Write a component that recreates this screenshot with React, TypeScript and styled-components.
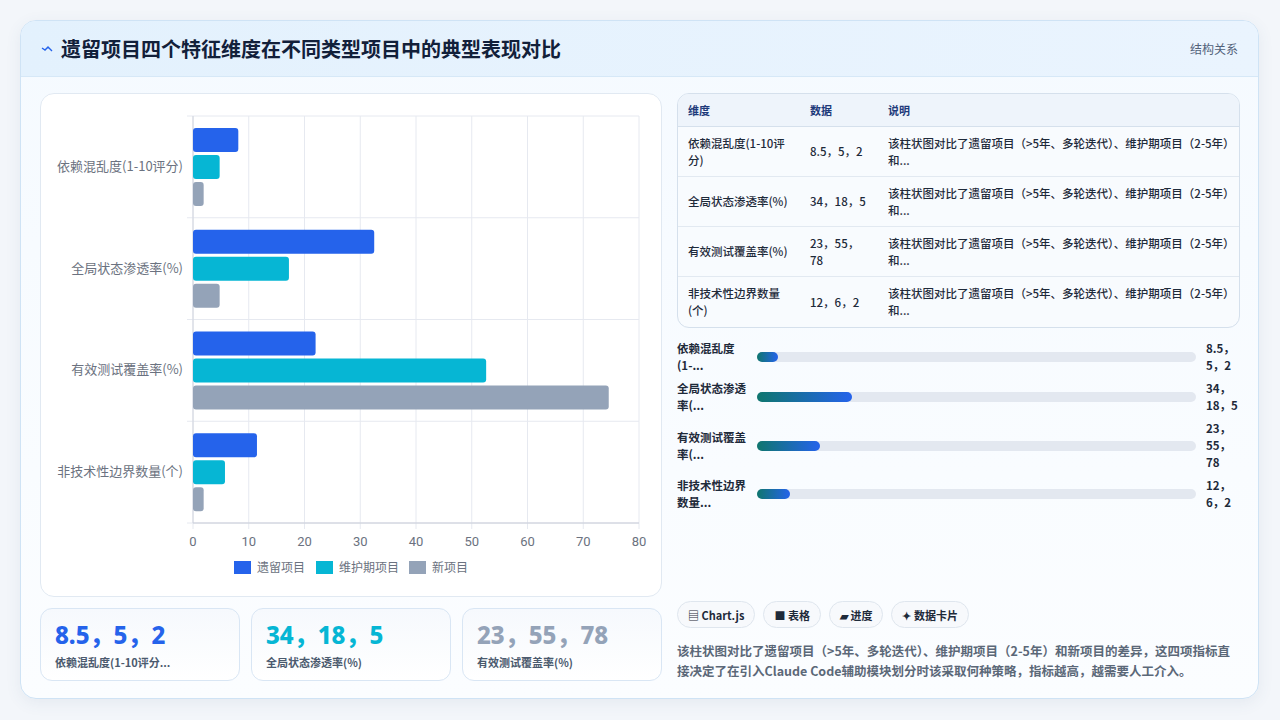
import React from "react";
import styled, { createGlobalStyle } from "styled-components";

const Global = createGlobalStyle`
  body { margin: 0; background: #f3f6fa; font-family: "Noto Sans CJK SC", "Noto Sans", sans-serif; }
  * { box-sizing: border-box; }
`;

const Page = styled.div`
  width: 1280px; height: 720px; padding: 20px 21px 21px 20px;
`;
const Card = styled.div`
  height: 679px; border: 1px solid #cfe3f5; border-radius: 16px; overflow: hidden;
  background: linear-gradient(180deg, #f5faff 0%, #fbfdff 100%);
  display: flex; flex-direction: column;
  box-shadow: 0 4px 16px rgba(60,90,130,0.08);
`;
const Header = styled.div`
  height: 56px; flex: none; display: flex; align-items: center; justify-content: space-between;
  padding: 0 20px; background: linear-gradient(90deg, #e3f1fd, #eaf4fe);
  border-bottom: 1px solid #d6e8f7;
`;
const Title = styled.h1`
  margin: 0; font-size: 20px; font-weight: 700; color: #12203a; display: flex; align-items: center; gap: 8px;
`;
const HeaderLink = styled.span` font-size: 12px; color: #52627a; `;
const Body = styled.div`
  flex: 1; display: grid; grid-template-columns: 622px 1fr; gap: 15px; padding: 16px 18px 18px 19px;
`;
const Col = styled.div` display: flex; flex-direction: column; gap: 11px; min-width: 0; `;
const ChartCard = styled.div`
  height: 504px; background: #fff; border: 1px solid #e1e9f2; border-radius: 14px; position: relative;
`;
const Stats = styled.div` display: grid; grid-template-columns: repeat(3, 1fr); gap: 11px; `;
const Stat = styled.div`
  height: 73px; border: 1px solid #d9e6f4; border-radius: 12px; background: linear-gradient(180deg,#f6f9fd,#fff);
  padding: 11px 14px; display: flex; flex-direction: column; gap: 4px;
`;
const StatValue = styled.div<{ c: string }>` font-size: 24px; font-weight: 800; color: ${p => p.c}; line-height: 30px; font-family: "Noto Sans", "Noto Sans CJK SC", sans-serif; `;
const StatLabel = styled.div` font-size: 11px; font-weight: 700; color: #4b5a6e; `;

const Table = styled.table`
  width: 100%; border-collapse: separate; border-spacing: 0; border: 1px solid #d5e0ec; border-radius: 12px;
  overflow: hidden; background: #f8fbfe; font-size: 11px; table-layout: fixed;
`;
const Th = styled.th<{ w?: number }>`
  text-align: left; color: #1d3a7a; font-weight: 700; background: #eef4fb; height: 33px; padding: 0 10px;
  border-bottom: 1px solid #d5e0ec; ${p => p.w ? `width:${p.w}px;` : ""}
`;
const Td = styled.td`
  color: #1e2a3a; font-weight: 500; padding: 6px 10px; height: 50px; line-height: 17px; vertical-align: middle;
  border-bottom: 1px solid #e2e9f1; font-size: 11.5px;
  tr:last-child & { border-bottom: none; }
`;
const Progress = styled.div` display: flex; flex-direction: column; gap: 6px; margin-top: 1px; `;
const PRow = styled.div` display: grid; grid-template-columns: 80px 1fr 34px; align-items: center; `;
const PLabel = styled.div` font-size: 11.5px; font-weight: 700; color: #1e2a3a; line-height: 17px; width: 72px; `;
const Track = styled.div` height: 10px; border-radius: 5px; background: #e3e8f0; margin-right: 10px; `;
const Fill = styled.div` height: 10px; border-radius: 5px; background: linear-gradient(90deg,#0f766e,#2563eb); `;
const PVal = styled.div` font-size: 11.5px; font-weight: 700; color: #1e2a3a; line-height: 17px; `;
const Spacer = styled.div` flex: 1; `;
const Chips = styled.div` display: flex; gap: 8px; `;
const Chip = styled.span`
  height: 27px; padding: 0 10px; border-radius: 14px; border: 1px solid #dfe6ee; background: #f7f9fc;
  font-size: 11px; font-weight: 700; color: #1e2a3a; display: flex; align-items: center; gap: 3px;
`;
const Para = styled.p` margin: 2px 0 0; font-size: 12.5px; line-height: 20px; font-weight: 700; color: #5b6878; `;

const cats = ["依赖混乱度(1-10评分)", "全局状态渗透率(%)", "有效测试覆盖率(%)", "非技术性边界数量(个)"];
const data = [[8.5, 5, 2], [34, 18, 5], [23, 55, 78], [12, 6, 2]];
const colors = ["#2563eb", "#06b6d4", "#94a3b8"];

function Chart() {
  const x0 = 152, x1 = 598, y0 = 22, y1 = 429;
  const sx = (v: number) => x0 + (v / 80) * (x1 - x0);
  const bar = (v: number) => v * 5.33;
  const band = (y1 - y0) / 4;
  return (
    <svg width="622" height="504" style={{ display: "block" }}>
      {Array.from({ length: 9 }).map((_, i) => (
        <line key={i} x1={sx(i * 10)} x2={sx(i * 10)} y1={y0} y2={y1 + 6} stroke="#e6e9f0" />
      ))}
      {[0, 1, 2, 3, 4].map(i => (
        <line key={i} x1={x0 - 6} x2={x1} y1={y0 + i * band} y2={y0 + i * band} stroke="#e6e9f0" />
      ))}
      <line x1={x0} x2={x0} y1={y0} y2={y1} stroke="#d0d4de" />
      <line x1={x0} x2={x1} y1={y1} y2={y1} stroke="#c8ccd8" />
      {data.map((d, ci) => (
        <g key={ci}>
          {d.map((v, si) => (
            <rect key={si} x={x0} y={y0 + ci * band + 12 + si * 27} width={bar(v)} height={24} rx={3} fill={colors[si]} />
          ))}
          <text x={x0 - 10} y={y0 + ci * band + band / 2 + 4} textAnchor="end" fontSize="13" fill="#6b7280" fontFamily="Noto Sans CJK SC, sans-serif">{cats[ci]}</text>
        </g>
      ))}
      {Array.from({ length: 9 }).map((_, i) => (
        <text key={i} x={sx(i * 10)} y={452} textAnchor="middle" fontSize="13" fill="#6b7280" fontFamily="Roboto, sans-serif">{i * 10}</text>
      ))}
      {[["遗留项目", 193], ["维护期项目", 275], ["新项目", 368]].map(([t, x], i) => (
        <g key={i}>
          <rect x={x as number} y={467} width={17} height={13} fill={colors[i]} />
          <text x={(x as number) + 23} y={478} fontSize="12" fill="#6b7280" fontFamily="Noto Sans CJK SC, sans-serif">{t}</text>
        </g>
      ))}
    </svg>
  );
}

const rows = [
  ["依赖混乱度(1-10评分)", "8.5，5，2"],
  ["全局状态渗透率(%)", "34，18，5"],
  ["有效测试覆盖率(%)", "23，55，78"],
  ["非技术性边界数量(个)", "12，6，2"],
];
const desc = "该柱状图对比了遗留项目（>5年、多轮迭代）、维护期项目（2-5年）和...";
const prog = [
  ["依赖混乱度(1-...", "8.5，5，2", 21],
  ["全局状态渗透率(...", "34，18，5", 95],
  ["有效测试覆盖率(...", "23，55，78", 63],
  ["非技术性边界数量...", "12，6，2", 33],
] as const;

export default function App() {
  return (
    <Page>
      <Global />
      <Card>
        <Header>
          <Title>
            <svg width="12" height="12" viewBox="0 0 12 12"><path d="M1 5l3 2 3-3 4 4" stroke="#2563eb" strokeWidth="1.4" fill="none" /></svg>
            遗留项目四个特征维度在不同类型项目中的典型表现对比
          </Title>
          <HeaderLink>结构关系</HeaderLink>
        </Header>
        <Body>
          <Col>
            <ChartCard><Chart /></ChartCard>
            <Stats>
              <Stat><StatValue c="#2563eb">8.5，5，2</StatValue><StatLabel>依赖混乱度(1-10评分...</StatLabel></Stat>
              <Stat><StatValue c="#06b6d4">34，18，5</StatValue><StatLabel>全局状态渗透率(%)</StatLabel></Stat>
              <Stat><StatValue c="#94a3b8">23，55，78</StatValue><StatLabel>有效测试覆盖率(%)</StatLabel></Stat>
            </Stats>
          </Col>
          <Col>
            <Table>
              <thead><tr><Th w={122}>维度</Th><Th w={78}>数据</Th><Th>说明</Th></tr></thead>
              <tbody>
                {rows.map(r => (
                  <tr key={r[0]}><Td>{r[0]}</Td><Td>{r[1]}</Td><Td>{desc}</Td></tr>
                ))}
              </tbody>
            </Table>
            <Progress>
              {prog.map(p => (
                <PRow key={p[0]}>
                  <PLabel>{p[0]}</PLabel>
                  <Track><Fill style={{ width: p[2] }} /></Track>
                  <PVal>{p[1]}</PVal>
                </PRow>
              ))}
            </Progress>
            <Spacer />
            <Chips>
              <Chip>▤ Chart.js</Chip><Chip>■ 表格</Chip><Chip>▰ 进度</Chip><Chip>✦ 数据卡片</Chip>
            </Chips>
            <Para>该柱状图对比了遗留项目（&gt;5年、多轮迭代）、维护期项目（2-5年）和新项目的差异，这四项指标直接决定了在引入Claude Code辅助模块划分时该采取何种策略，指标越高，越需要人工介入。</Para>
          </Col>
        </Body>
      </Card>
    </Page>
  );
}
